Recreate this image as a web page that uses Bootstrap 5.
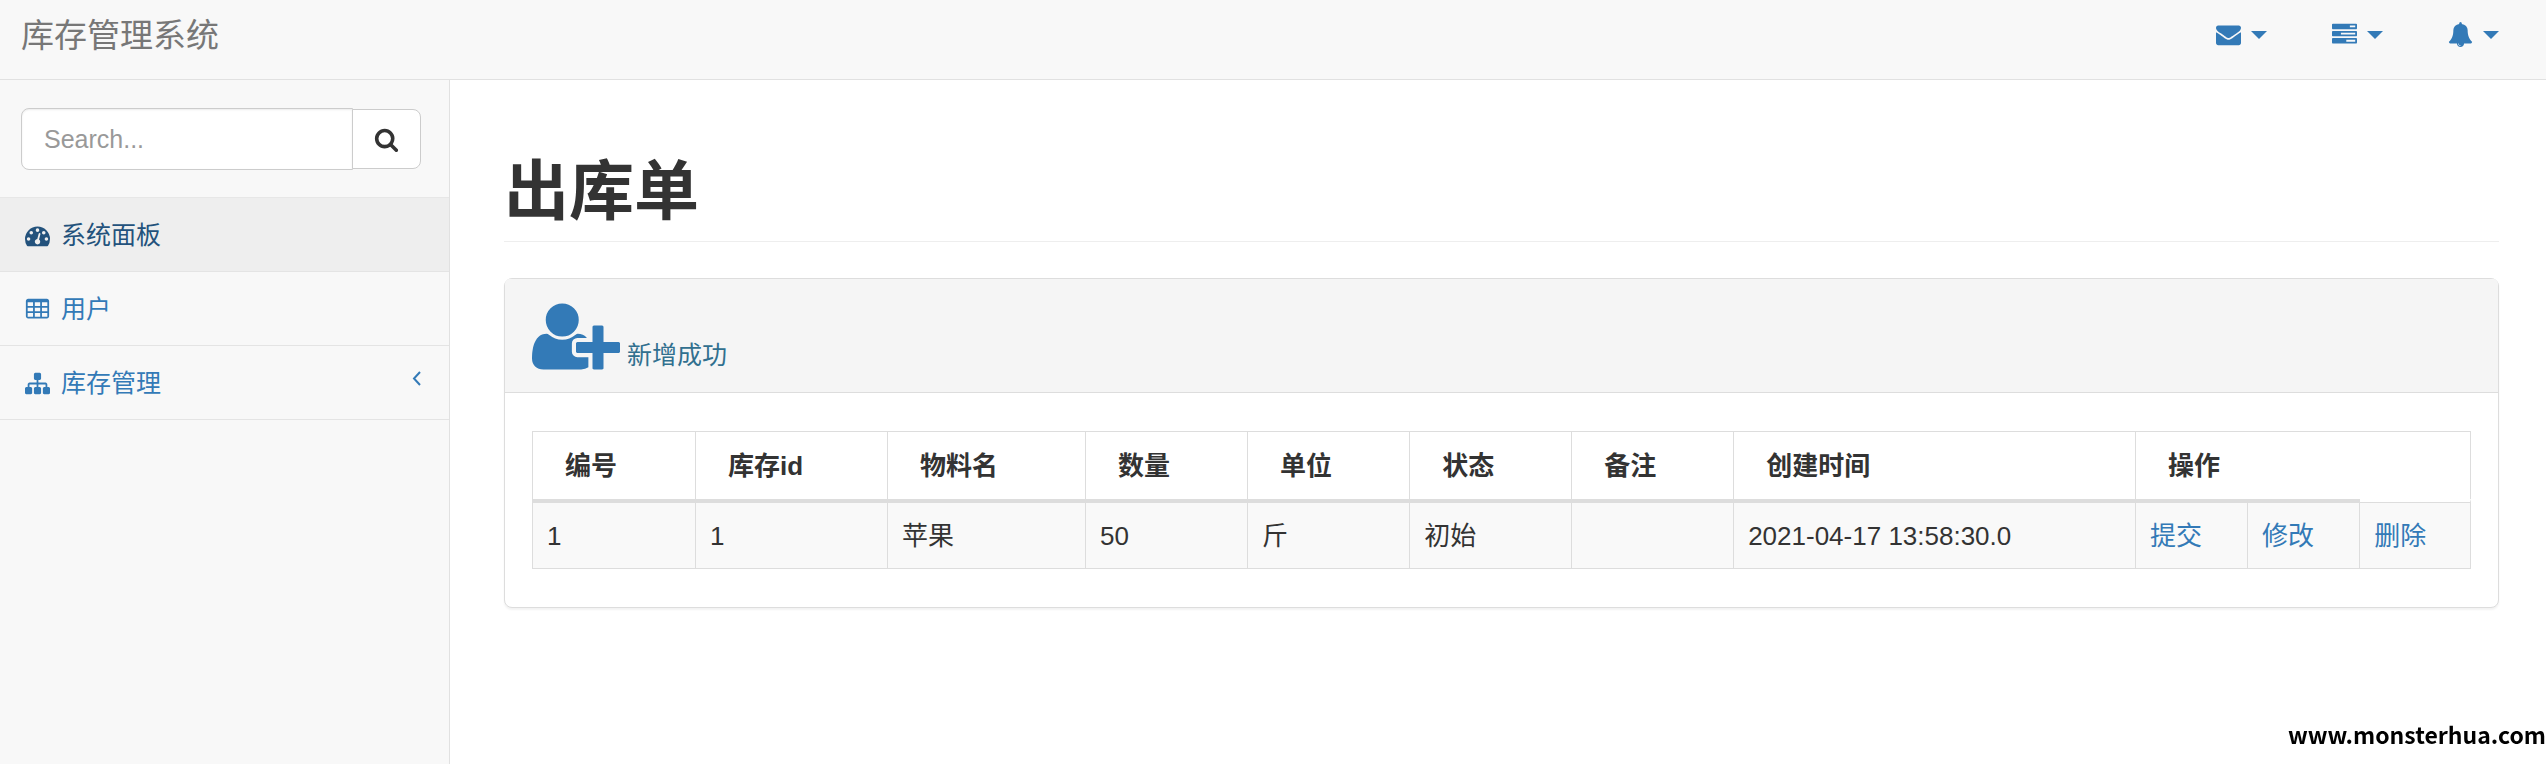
<!DOCTYPE html>
<html lang="zh-CN">
<head>
<meta charset="utf-8">
<meta name="viewport" content="width=device-width, initial-scale=1">
<title>库存管理系统</title>
<link rel="stylesheet" href="https://cdn.jsdelivr.net/npm/bootstrap@5.3.0/dist/css/bootstrap.min.css">
<style>
  body { font-family: "Liberation Sans", "Noto Sans CJK SC", sans-serif; font-size: 25px; line-height: 36px; color: #333; background: #fff; }
  a { color: #337ab7; text-decoration: none; }
  a:hover { color: #23527c; }
  svg { fill: currentColor; }
  .ico { width: 25px; height: 25px; flex: none; }

  .topbar { height: 80px; background: #f8f8f8; border-bottom: 1px solid #e1e1e1; padding: 0 20px 0 21px; align-items: flex-start; }
  .topbar .navbar-brand { font-size: 33px; line-height: 36px; color: #777; padding: 18px 0 0; margin: 0; }
  .tool-link { padding: 22px 27px; line-height: 25px; gap: 10px; color: #337ab7; }
  .tools { gap: 11px; }
  .tool-link::after { border-top: 8px solid; border-right: 8px solid transparent; border-left: 8px solid transparent; margin: 0; }

  .side { width: 450px; flex: none; background: #f8f8f8; border-right: 1px solid #e1e1e1; }
  .search-box { padding: 28px 28px 27px 21px; border-bottom: 1px solid #e7e7e7; }
  .search-box .form-control { height: 62px; font-size: 25px; padding: 0 22px; border-color: #ccc; border-radius: 8px; color: #555; box-shadow: inset 0 1px 2px rgba(0,0,0,.08); }
  .search-box .form-control::placeholder { color: #999; opacity: 1; }
  .search-box .btn { width: 69px; height: 60px; padding: 0; background: #fff; border: 1px solid #ccc; border-radius: 8px; color: #333; }
  .side .nav-link { padding: 19px 28px 18px 25px; gap: 11px; color: #337ab7; border-bottom: 1px solid #e4e4e4; }
  .side .nav-link.active { background: #eee; color: #23527c; }
  .arrow { width: 9px; height: 15px; fill: none; stroke: currentColor; stroke-width: 2; margin-bottom: 10px; }

  .content-area { padding: 0 47px 0 54px; min-width: 0; }
  .page-title { font-size: 65px; line-height: 72px; font-weight: 700; margin: 76px 0 36px; padding-bottom: 13px; border-bottom: 1px solid #eee; }
  .panel-card { border: 1px solid #ddd; border-radius: 8px; box-shadow: 0 2px 2px rgba(0,0,0,.05); }
  .panel-card .card-header { background: #f5f5f5; border-color: #ddd; padding: 19px 27px 17px; }
  .panel-card .card-body { padding: 38px 27px; }
  .add-ico { width: 88px; height: 77px; }
  .add-link { gap: 7px; color: #31708f; }
  .add-link span { padding-bottom: 2px; }
  .add-ico { color: #337ab7; }

  .stock { table-layout: fixed; border-collapse: separate; border-spacing: 0; border-top: 1px solid #ddd; border-left: 1px solid #ddd; margin: 0; color: #333; font-size: 26px; }
  .stock th, .stock td { border: 0 solid #ddd; border-right-width: 1px; line-height: 36px; white-space: nowrap; }
  .stock th { padding: 16px 15px 15px 32px; }
  .stock td { padding: 15px 14px 14px; background: #f9f9f9; border-top-width: 4px; border-bottom-width: 1px; box-shadow: none; }
  .stock td:last-child { border-top: 3px solid #fff; padding-top: 16px; box-shadow: inset 0 1px #ddd; }

  .watermark { right: 0; bottom: 0; z-index: 10; font-family: "Noto Sans CJK SC", sans-serif; font-weight: 700; font-size: 23px; line-height: 60px; color: #000; }
</style>
</head>
<body class="d-flex flex-column min-vh-100">
<nav class="navbar topbar justify-content-between flex-nowrap">
  <a class="navbar-brand" href="#">库存管理系统</a>
  <ul class="nav tools flex-nowrap">
    <li><a class="tool-link dropdown-toggle d-flex align-items-center" href="#" data-bs-toggle="dropdown" aria-label="消息"><svg class="ico" viewBox="0 0 1792 1792"><path d="M1792 710v794q0 66-47 113t-113 47h-1472q-66 0-113-47t-47-113v-794q44 49 101 87 362 246 497 345 57 42 92.5 65.5t94.5 48 110 24.5h2q51 0 110-24.5t94.5-48 92.5-65.5q170-123 498-345 57-39 100-87zm0-294q0 79-49 151t-122 123q-376 261-468 325-10 7-42.5 31t-54 38.5-52 32.5-57.5 27-50 9h-2q-23 0-50-9t-57.5-27-52-32.5-54-38.5-42.5-31q-91-64-262-182.5t-205-142.5q-62-42-117-115.5t-55-136.5q0-78 41.5-130t118.5-52h1472q65 0 112.5 47t47.5 113z"/></svg></a></li>
    <li><a class="tool-link dropdown-toggle d-flex align-items-center" href="#" data-bs-toggle="dropdown" aria-label="任务"><svg class="ico" viewBox="0 0 1792 1792"><path d="M1024 1408h640v-128h-640v128zm-384-512h1024v-128h-1024v128zm640-512h384v-128h-384v128zm512 832v256q0 26-19 45t-45 19h-1664q-26 0-45-19t-19-45v-256q0-26 19-45t45-19h1664q26 0 45 19t19 45zm0-512v256q0 26-19 45t-45 19h-1664q-26 0-45-19t-19-45v-256q0-26 19-45t45-19h1664q26 0 45 19t19 45zm0-512v256q0 26-19 45t-45 19h-1664q-26 0-45-19t-19-45v-256q0-26 19-45t45-19h1664q26 0 45 19t19 45z"/></svg></a></li>
    <li><a class="tool-link dropdown-toggle d-flex align-items-center" href="#" data-bs-toggle="dropdown" aria-label="通知"><svg class="ico" viewBox="0 0 1792 1792"><path d="M912 1696q0-16-16-16-59 0-101.5-42.5t-42.5-101.5q0-16-16-16t-16 16q0 73 51.5 124.5t124.5 51.5q16 0 16-16zm816-288q0 52-38 90t-90 38h-448q0 106-75 181t-181 75-181-75-75-181h-448q-52 0-90-38t-38-90q50-42 91-88t85-119.5 74.5-158.5 50-206 19.5-260q0-152 117-282.5t307-158.5q-8-19-8-39 0-40 28-68t68-28 68 28 28 68q0 20-8 39 190 28 307 158.5t117 282.5q0 139 19.5 260t50 206 74.5 158.5 85 119.5 91 88z"/></svg></a></li>
  </ul>
</nav>

<div class="d-flex flex-grow-1">
  <aside class="side">
    <form class="search-box">
      <div class="input-group align-items-center">
        <input type="text" class="form-control" placeholder="Search..." aria-label="Search">
        <button class="btn d-flex align-items-center justify-content-center" type="button" aria-label="搜索"><svg class="ico" viewBox="0 0 1792 1792"><path d="M1216 832q0-185-131.5-316.5t-316.5-131.5-316.5 131.5-131.5 316.5 131.5 316.5 316.5 131.5 316.5-131.5 131.5-316.5zm512 832q0 52-38 90t-90 38q-54 0-90-38l-343-342q-179 124-399 124-143 0-273.5-55.5t-225-150-150-225-55.5-273.5 55.5-273.5 150-225 225-150 273.5-55.5 273.5 55.5 225 150 150 225 55.5 273.5q0 220-124 399l343 343q37 37 37 90z"/></svg></button>
      </div>
    </form>
    <nav class="nav flex-column">
      <a class="nav-link active d-flex align-items-center" href="#"><svg class="ico" viewBox="0 0 1792 1792"><path fill-rule="evenodd" d="M0 1152a896 896 0 0 1 1792 0q0 261-141 483-19 29-54 29h-1402q-35 0-54-29q-141-221-141-483zM384 1152a128 128 0 1 0-256 0a128 128 0 1 0 256 0zM576 704a128 128 0 1 0-256 0a128 128 0 1 0 256 0zM1004 1185l101-382q6-26-7.500-48.500t-38.500-29.500-48 6.500-30 39.500l-101 382q-60 5-107 43.500t-63 98.500q-20 77 20 146t117 89 146-20 89-117q16-60-6-117t-72-91zM1664 1152a128 128 0 1 0-256 0a128 128 0 1 0 256 0zM1024 512a128 128 0 1 0-256 0a128 128 0 1 0 256 0zM1472 704a128 128 0 1 0-256 0a128 128 0 1 0 256 0z"/></svg><span>系统面板</span></a>
      <a class="nav-link d-flex align-items-center" href="#"><svg class="ico" viewBox="0 0 1792 1792"><path fill-rule="evenodd" d="M224 128h1344q66 0 113 47t47 113v1088q0 66-47 113t-113 47h-1344q-66 0-113-47t-47-113v-1088q0-66 47-113t113-47zM192 384v256h384v-256zM704 384v256h384v-256zM1216 384v256h384v-256zM192 768v256h384v-256zM704 768v256h384v-256zM1216 768v256h384v-256zM192 1152v256h384v-256zM704 1152v256h384v-256zM1216 1152v256h384v-256z"/></svg><span>用户</span></a>
      <a class="nav-link d-flex align-items-center" href="#"><svg class="ico" viewBox="0 0 1792 1792"><path d="M1792 1248v320q0 40-28 68t-68 28h-320q-40 0-68-28t-28-68v-320q0-40 28-68t68-28h96v-192h-512v192h96q40 0 68 28t28 68v320q0 40-28 68t-68 28h-320q-40 0-68-28t-28-68v-320q0-40 28-68t68-28h96v-192h-512v192h96q40 0 68 28t28 68v320q0 40-28 68t-68 28h-320q-40 0-68-28t-28-68v-320q0-40 28-68t68-28h96v-192q0-52 38-90t90-38h512v-192h-96q-40 0-68-28t-28-68v-320q0-40 28-68t68-28h320q40 0 68 28t28 68v320q0 40-28 68t-68 28h-96v192h512q52 0 90 38t38 90v192h96q40 0 68 28t28 68z"/></svg><span>库存管理</span><svg class="arrow ms-auto" viewBox="0 0 9 15"><path d="M8 1L2 7.500L8 14"/></svg></a>
    </nav>
  </aside>

  <main class="content-area flex-grow-1">
    <h1 class="page-title">出库单</h1>
    <section class="card panel-card">
      <div class="card-header d-flex">
        <a class="add-link d-flex align-items-end" href="#"><svg class="add-ico" viewBox="0 0 2048 1792"><path d="M704 896q-159 0-271.5-112.5t-112.5-271.5 112.5-271.5 271.5-112.5 271.5 112.5 112.5 271.5-112.5 271.5-271.5 112.500zm960 128h352q13 0 22.500 9.500t9.500 22.500v192q0 13-9.500 22.500t-22.500 9.500h-352v352q0 13-9.500 22.500t-22.500 9.500h-192q-13 0-22.500-9.500t-9.500-22.500v-352h-352q-13 0-22.500-9.500t-9.500-22.500v-192q0-13 9.500-22.500t22.500-9.500h352v-352q0-13 9.500-22.500t22.500-9.500h192q13 0 22.500 9.500t9.500 22.500v352zm-736 224q0 52 38 90t90 38h256v238q-68 50-171 50h-874q-121 0-194-69t-73-190q0-53 3.500-103.500t14-109 26.500-108.500 43-97.500 62-81 85.500-53.500 111.500-20q19 0 39 17 79 61 154.500 91.500t164.500 30.500 164.500-30.500 154.500-91.500q20-17 39-17 132 0 217 96h-223q-52 0-90 38t-38 90v192z"/></svg><span>新增成功</span></a>
      </div>
      <div class="card-body">
        <table class="table stock">
          <colgroup>
            <col style="width:8.41%"><col style="width:9.91%"><col style="width:10.22%"><col style="width:8.36%"><col style="width:8.36%"><col style="width:8.36%"><col style="width:8.36%"><col style="width:20.74%"><col style="width:5.78%"><col style="width:5.78%"><col style="width:5.72%">
          </colgroup>
          <thead>
            <tr><th>编号</th><th>库存id</th><th>物料名</th><th>数量</th><th>单位</th><th>状态</th><th>备注</th><th>创建时间</th><th colspan="3">操作</th></tr>
          </thead>
          <tbody>
            <tr><td>1</td><td>1</td><td>苹果</td><td>50</td><td>斤</td><td>初始</td><td></td><td>2021-04-17 13:58:30.0</td><td><a href="#">提交</a></td><td><a href="#">修改</a></td><td><a href="#">删除</a></td></tr>
          </tbody>
        </table>
      </div>
    </section>
  </main>
</div>
<div class="watermark position-fixed">www.monsterhua.com</div>
<script src="https://cdn.jsdelivr.net/npm/bootstrap@5.3.0/dist/js/bootstrap.bundle.min.js"></script>
</body>
</html>
